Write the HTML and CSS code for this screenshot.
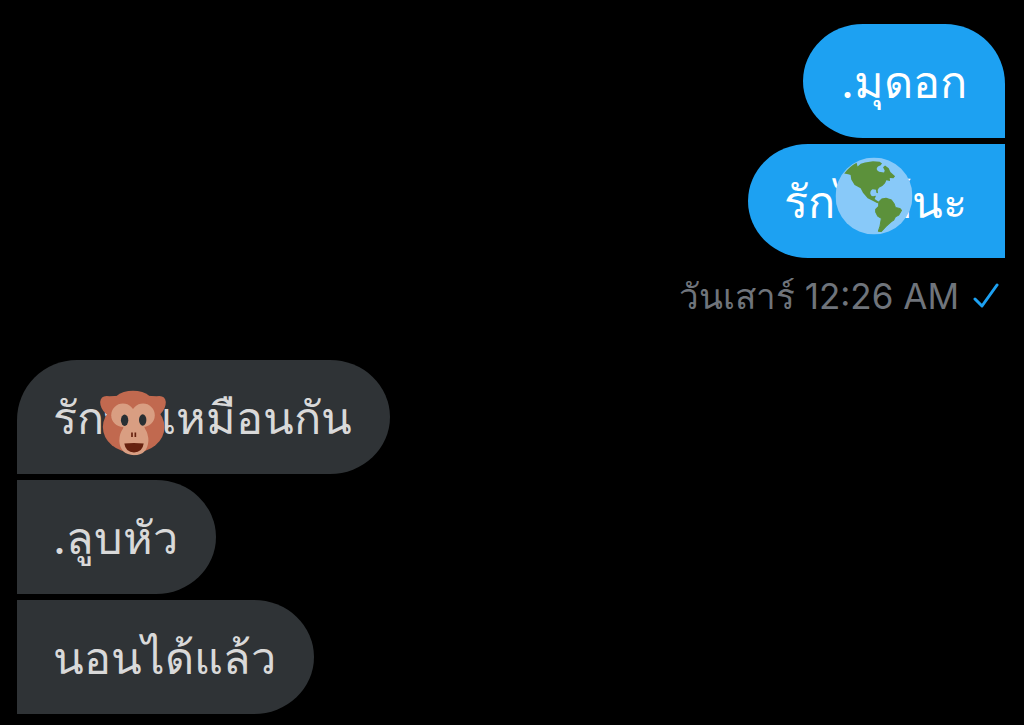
FILE: index.html
```html
<!DOCTYPE html>
<html lang="th">
<head>
<meta charset="utf-8">
<meta name="viewport" content="width=device-width, initial-scale=1">
<title>ข้อความ</title>
<link rel="stylesheet" href="styles.css">
</head>
<body>
<main class="chat">
  <section class="group sent">
    <p class="bubble first">.มุดอก</p>
    <p class="bubble">รัก<span class="covered">ไรท์<svg class="emoji globe" viewBox="28 25 230 230" aria-hidden="true">
      <circle cx="143" cy="140" r="115" fill="#88c9f9"/>
      <path fill="#5c913b" d="M54 73 Q70 52 91 41 L94 52 Q102 42 116 40 L140 36 L160 38 L167 43 L162 49 Q152 51 151 59 Q153 67 163 68 L173 70 L175 64 L170 54 L176 49 L187 57 L192 68 L206 81 L201 87 L190 86 L191 95 L180 93 L176 102 L168 110 L158 115 L154 122 L155 132 L150 130 L149 121 L139 120 Q131 124 132 133 Q135 143 143 140 L149 139 L145 149 L158 158 L153 162 L139 154 L124 147 L110 130 L103 117 L85 107 L75 91 L73 77 L66 75Z"/>
      <path fill="#5c913b" d="M157 158 L166 149 L179 147 L195 152 L203 163 L207 174 L220 177 L225 183 L217 197 L207 202 L202 212 L194 217 L179 231 L165 246 L156 245 L161 230 L165 207 L154 200 L148 188 L148 180 L157 171Z" stroke="#5c913b" stroke-width="3" stroke-linejoin="round"/>
    </svg></span>นะ</p>
    <div class="meta">
      <time>วันเสาร์ 12:26 AM</time>
      <svg class="tick" viewBox="0 0 26 26" role="img" aria-label="ส่งแล้ว"><path d="M2 16 L9 23 L24 2"/></svg>
    </div>
  </section>
  <section class="group received">
    <p class="bubble first">รัก<span class="covered">พ่อ<svg class="emoji monkey" viewBox="32 32 196 194" aria-hidden="true">
      <g fill="#c1694f">
        <ellipse cx="132" cy="141" rx="92" ry="77"/>
        <ellipse cx="130" cy="92" rx="72" ry="60"/>
        <path d="M60 49 Q34 44 32 66 Q32 86 50 102 L90 100 L90 48Z"/>
        <path d="M200 49 Q226 44 228 66 Q228 86 212 102 L170 100 L172 48Z"/>
      </g>
      <circle cx="100" cy="106" r="35" fill="#d99e82"/>
      <circle cx="160" cy="106" r="35" fill="#d99e82"/>
      <path fill="#d99e82" d="M110 110 H152 L166 146 Q176 162 176 182 Q173 225 133 225 Q92 224 89 183 Q89 160 100 146Z"/>
      <ellipse cx="105" cy="121" rx="11" ry="17" fill="#292f33"/>
      <ellipse cx="159" cy="120" rx="11" ry="17" fill="#292f33"/>
      <path d="M127 157v14M137 157v14" stroke="#66210f" stroke-width="5"/>
      <path fill="#66210f" d="M104 190 Q132 187 162 190 Q158 216 133 217 Q108 216 104 190Z"/>
    </svg></span>เหมือนกัน</p>
    <p class="bubble">.ลูบหัว</p>
    <p class="bubble">นอนได้แล้ว</p>
  </section>
</main>
</body>
</html>
```
FILE: styles.css
```css
body {
  margin: 0;
  background: #000;
  font-family: Inter, sans-serif;
}

.chat {
  display: flex;
  flex-direction: column;
  gap: 40px;
  padding: 24px 19px 11px 17px;
}

.group {
  display: flex;
  flex-direction: column;
  gap: 6px;
}

.sent {
  align-items: flex-end;
}

.received {
  align-items: flex-start;
}

.bubble {
  margin: 0;
  padding: 28px 38px 26px 36px;
  font-size: 45px;
  line-height: 60px;
  white-space: nowrap;
}

.sent .bubble {
  background: #1da1f2;
  color: #fff;
  border-radius: 60px 0 0 60px / 57px 0 0 57px;
}

.sent .first {
  padding-left: 38px;
  border-radius: 60px 60px 0 60px / 57px 60px 0 57px;
}

.received .bubble {
  background: #2f3336;
  color: #d9d9d9;
  border-radius: 0 60px 60px 0 / 0 57px 57px 0;
}

.received .first {
  border-radius: 60px 60px 60px 0 / 60px 57px 57px 0;
}

.covered {
  position: relative;
}

.emoji {
  position: absolute;
  left: 50%;
  transform: translate(-50%, -50%);
}

.globe {
  top: 40%;
  width: 77px;
  height: 77px;
}

.monkey {
  top: 60%;
  width: 66px;
  height: 65px;
}

.meta {
  display: flex;
  align-items: center;
  gap: 14px;
  padding: 8px 6px 0 0;
  color: #6f747b;
  font-size: 35px;
  line-height: 48px;
}

.tick {
  width: 26px;
  height: 26px;
  fill: none;
  stroke: #1da1f2;
  stroke-width: 3;
  stroke-linecap: round;
  stroke-linejoin: round;
}
```
